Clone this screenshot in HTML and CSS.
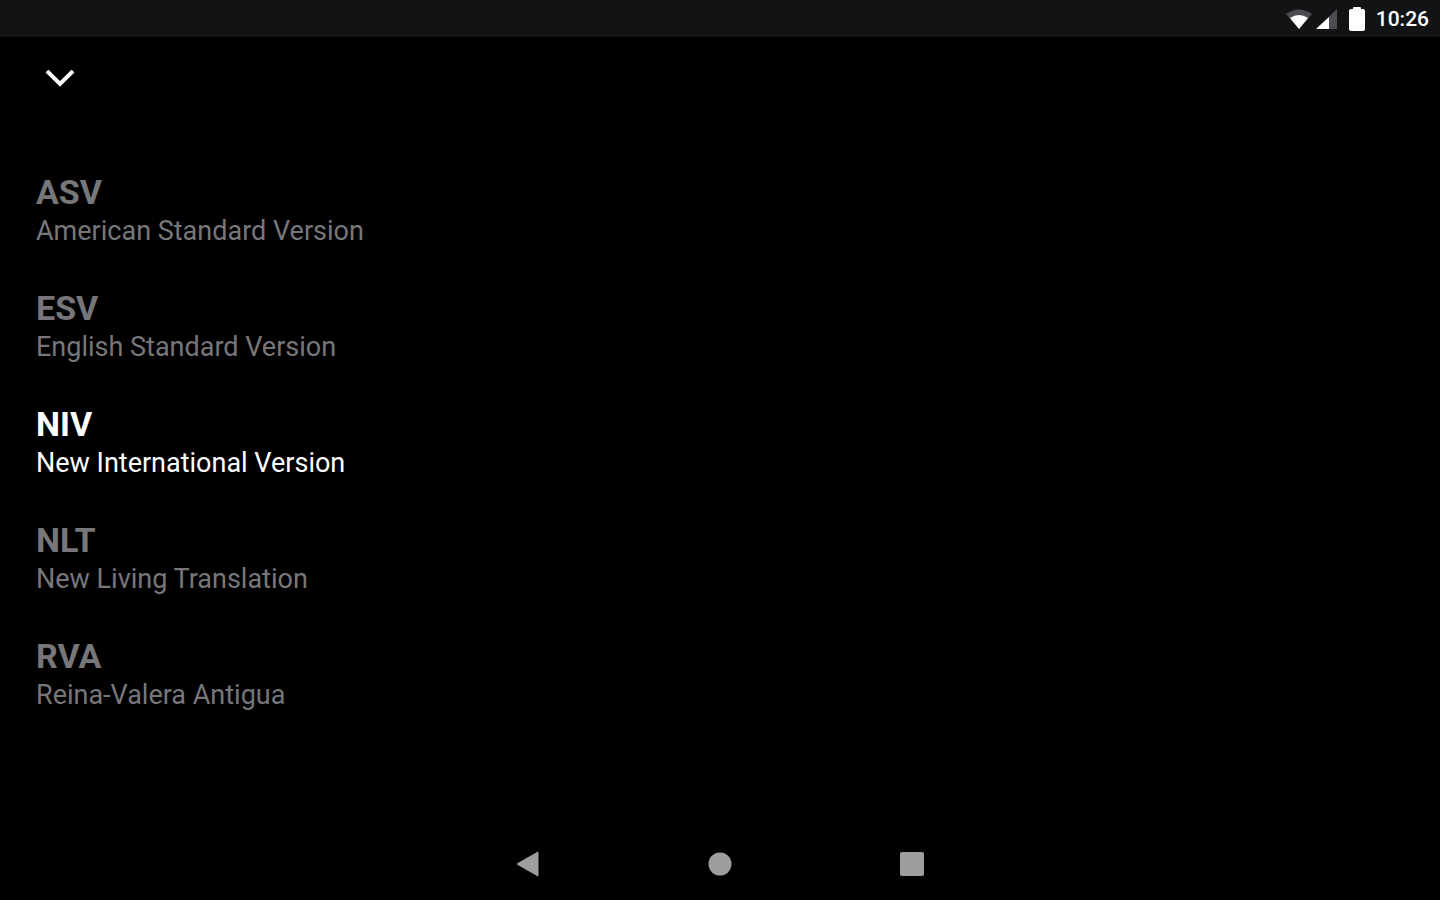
FILE: index.html
```html
<!DOCTYPE html>
<html lang="en">
<head>
    <meta charset="UTF-8">
    <title>Bible versions</title>
    <meta name="viewport" content="width=device-width, initial-scale=1.0">
    <link rel="stylesheet" href="styles.css">
</head>
<body>
<header class="status-bar">
    <svg class="wifi" width="26" height="20" viewBox="0 0 26 20">
        <path fill="#4b4c4f" d="M0 5Q13-4 26 5L13 20Z"/>
        <path fill="#fff" d="M4 9Q13 3 22 9L13 20Z"/>
    </svg>
    <svg class="signal" width="21" height="20" viewBox="0 0 21 20">
        <path fill="#4b4c4f" d="M0 20L21 0V20Z"/>
        <path fill="#fff" d="M0 20L13 8V20Z"/>
    </svg>
    <svg class="battery" width="16" height="24" viewBox="0 0 16 24">
        <path fill="#fff" d="M4 2V1Q4 0 5 0H11Q12 0 12 1V2H14Q16 2 16 4V22Q16 24 14 24H2Q0 24 0 22V4Q0 2 2 2Z"/>
    </svg>
    <span class="time">10:26</span>
</header>
<div class="toolbar">
    <button class="close" type="button" aria-label="Close">
        <svg width="30" height="18" viewBox="0 0 30 18">
            <path fill="none" stroke="#fff" stroke-width="4" d="M2 1L15 14L28 1"/>
        </svg>
    </button>
</div>
<main>
    <ul class="versions">
        <li>
            <button class="version" type="button">
                <span class="short">ASV</span>
                <span class="full">American Standard Version</span>
            </button>
        </li>
        <li>
            <button class="version" type="button">
                <span class="short">ESV</span>
                <span class="full">English Standard Version</span>
            </button>
        </li>
        <li>
            <button class="version active" type="button" aria-pressed="true">
                <span class="short">NIV</span>
                <span class="full">New International Version</span>
            </button>
        </li>
        <li>
            <button class="version" type="button">
                <span class="short">NLT</span>
                <span class="full">New Living Translation</span>
            </button>
        </li>
        <li>
            <button class="version" type="button">
                <span class="short">RVA</span>
                <span class="full">Reina-Valera Antigua</span>
            </button>
        </li>
    </ul>
</main>
<nav class="nav-bar">
    <button type="button" aria-label="Back">
        <svg width="24" height="26" viewBox="0 0 24 26">
            <path fill="#9e9e9e" d="M1 13L22 1V25Z" stroke="#9e9e9e" stroke-linejoin="round"/>
        </svg>
    </button>
    <button type="button" aria-label="Home">
        <svg width="24" height="24" viewBox="0 0 24 24">
            <circle cx="12" cy="12" r="11.5" fill="#9e9e9e"/>
        </svg>
    </button>
    <button type="button" aria-label="Recent apps">
        <svg width="24" height="24" viewBox="0 0 24 24">
            <rect width="24" height="24" rx="2" fill="#9e9e9e"/>
        </svg>
    </button>
</nav>
</body>
</html>
```
FILE: styles.css
```css
*{margin: 0;padding: 0;box-sizing: border-box;}
body{
    display: flex;
    flex-direction: column;
    min-height: 100vh;
    background-color: #000;
    color: #fff;
    font-family: Roboto, "Liberation Sans", sans-serif;
}
svg{display: block;}
button{
    border: none;
    background: none;
    color: inherit;
    font-family: inherit;
    cursor: pointer;
}

.status-bar{
    display: flex;
    justify-content: flex-end;
    align-items: center;
    height: 37px;
    padding-right: 11px;
    background-color: #121315;
}
.status-bar .signal{
    margin-left: 4px;
}
.status-bar .battery{
    margin-left: 12px;
}
.status-bar .time{
    margin-left: 11px;
    font-size: 21px;
    font-weight: 500;
    line-height: 24px;
}

.toolbar{
    padding: 20px 24px;
}
.toolbar .close{
    display: flex;
    justify-content: center;
    align-items: center;
    width: 72px;
    height: 44px;
}

main{
    flex: 1;
    padding: 32px 0;
}
.versions{
    list-style: none;
}
.version{
    display: block;
    width: 100%;
    padding: 19px 36px;
    color: #77777a;
    text-align: left;
}
.version.active{
    color: #fff;
}
.version span{
    display: block;
}
.version .short{
    font-size: 34px;
    font-weight: bold;
    line-height: 40px;
}
.version .full{
    font-size: 27px;
    line-height: 38px;
}

.nav-bar{
    display: flex;
    justify-content: center;
    height: 72px;
}
.nav-bar button{
    display: flex;
    justify-content: center;
    align-items: center;
    width: 192px;
}
```
